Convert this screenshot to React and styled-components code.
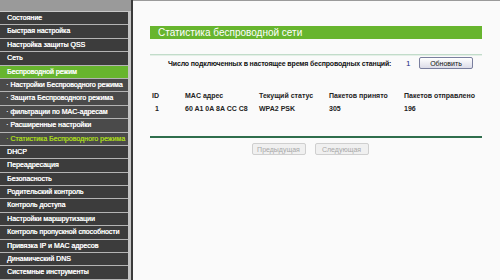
import React from 'react';
import styled, { createGlobalStyle } from 'styled-components';

const Global = createGlobalStyle`
  html, body { margin: 0; padding: 0; background: #fafafa; }
  body { font-family: "Liberation Sans", Arial, sans-serif; overflow: hidden; }
`;

const menu = [
  { label: 'Состояние' },
  { label: 'Быстрая настройка' },
  { label: 'Настройка защиты QSS' },
  { label: 'Сеть' },
  { label: 'Беспроводной режим', active: true },
  { label: 'Настройки Беспроводного режима', sub: true },
  { label: 'Защита Беспроводного режима', sub: true },
  { label: 'фильтрации по MAC-адресам', sub: true },
  { label: 'Расширенные настройки', sub: true },
  { label: 'Статистика Беспроводного режима', sub: true, current: true },
  { label: 'DHCP' },
  { label: 'Переадресация' },
  { label: 'Безопасность' },
  { label: 'Родительский контроль' },
  { label: 'Контроль доступа' },
  { label: 'Настройки маршрутизации' },
  { label: 'Контроль пропускной способности' },
  { label: 'Привязка IP и MAC адресов' },
  { label: 'Динамический DNS' },
  { label: 'Системные инструменты' },
];

const stations = [
  { id: 1, mac: '60 A1 0A 8A CC C8', status: 'WPA2 PSK', rx: 305, tx: 196 },
];

export default function App() {
  return (
    <>
      <Global />
      <Page>
        <Sidebar>
          <SideTop />
          <Menu>
            {menu.map((m) => (
              <Item key={m.label} $active={m.active} $sub={m.sub} $current={m.current}>
                {m.sub ? '· ' : ''}{m.label}
              </Item>
            ))}
          </Menu>
        </Sidebar>
        <Main>
          <Panel>
            <Title>Статистика беспроводной сети</Title>
            <LightRule />
            <CountRow>
              <CountLabel>Число подключенных в настоящее время беспроводных станций:</CountLabel>
              <CountValue>1</CountValue>
              <Button>Обновить</Button>
            </CountRow>
            <Table>
              <HeadCell>ID</HeadCell>
              <HeadCell>MAC адрес</HeadCell>
              <HeadCell>Текущий статус</HeadCell>
              <HeadCell>Пакетов принято</HeadCell>
              <HeadCell>Пакетов отправлено</HeadCell>
              {stations.map((s) => (
                <React.Fragment key={s.id}>
                  <Cell $center>{s.id}</Cell>
                  <Cell>{s.mac}</Cell>
                  <Cell>{s.status}</Cell>
                  <Cell>{s.rx}</Cell>
                  <Cell>{s.tx}</Cell>
                </React.Fragment>
              ))}
            </Table>
            <DarkRule />
            <Pager>
              <Button disabled>Предыдущая</Button>
              <Button disabled>Следующая</Button>
            </Pager>
          </Panel>
        </Main>
      </Page>
    </>
  );
}

const Page = styled.div`
  display: flex;
  width: 500px;
  height: 280px;
  overflow: hidden;
`;

const Sidebar = styled.div`
  width: 131px;
  flex: none;
  display: flex;
  flex-direction: column;
  border-right: 2px solid #3a3a3a;
  background: #c4c4c4;
`;

const SideTop = styled.div`
  height: 11px;
  background: #9a9a9a;
  border-bottom: 1px solid #c8c8c8;
`;

const Menu = styled.div`
  padding-right: 3px;
  background: #c4c4c4;
`;

const Item = styled.div`
  height: 12.4px;
  line-height: 12.4px;
  border-bottom: 1px solid #b4b4b4;
  padding-left: ${(p) => (p.$sub ? '6px' : '7px')};
  background: ${(p) => (p.$active ? '#67b52e' : p.$sub ? '#4a4a4a' : '#3c3c3c')};
  color: ${(p) => (p.$current ? '#a6d51e' : '#ffffff')};
  font-size: 7px;
  text-shadow: 0.35px 0 0 currentColor;
  white-space: nowrap;
  overflow: hidden;
`;

const Main = styled.div`
  flex: 1;
  background: #fafafa;
  border-top: 1px solid #9a9a9a;
  padding: 25px 0 0 17px;
`;

const Panel = styled.div`
  width: 332px;
`;

const Title = styled.div`
  height: 13px;
  line-height: 13px;
  background: #67b52e;
  color: #fff;
  font-size: 10px;
  padding-left: 8px;
`;

const LightRule = styled.div`
  height: 1px;
  margin-top: 15px;
  background: #c2dcca;
  border-bottom: 1px solid #e4efe7;
`;

const CountRow = styled.div`
  display: flex;
  align-items: center;
  height: 14px;
  padding-left: 18px;
  font-size: 7px;
  font-weight: bold;
  color: #111;
`;

const CountLabel = styled.span`
  width: 238px;
  white-space: nowrap;
  letter-spacing: -0.15px;
`;

const CountValue = styled.span`
  width: 13px;
  color: #1a2a80;
  font-weight: normal;
  font-size: 8px;
`;

const Button = styled.button`
  width: 54px;
  height: 12px;
  padding: 0;
  font-family: "Liberation Sans", Arial, sans-serif;
  font-size: 7px;
  color: #111;
  background: linear-gradient(#ffffff, #dcdce8);
  border: 1px solid #7a7f9e;
  border-radius: 2px;
  &:disabled {
    color: #a8a8a8;
    background: #f0f0f0;
    border-color: #cfcfcf;
  }
`;

const Table = styled.div`
  display: grid;
  grid-template-columns: 33px 74px 70px 75px 1fr;
  row-gap: 6px;
  margin-top: 22px;
  padding-left: 2px;
  font-size: 7px;
  font-weight: bold;
  color: #222;
`;

const HeadCell = styled.div`
  white-space: nowrap;
`;

const Cell = styled.div`
  white-space: nowrap;
  padding-left: ${(p) => (p.$center ? '3px' : '0')};
`;

const DarkRule = styled.div`
  height: 2px;
  margin-top: 24px;
  background: #2f6e4c;
`;

const Pager = styled.div`
  display: flex;
  justify-content: center;
  gap: 9px;
  margin-top: 5px;
  padding-right: 12px;
`;
